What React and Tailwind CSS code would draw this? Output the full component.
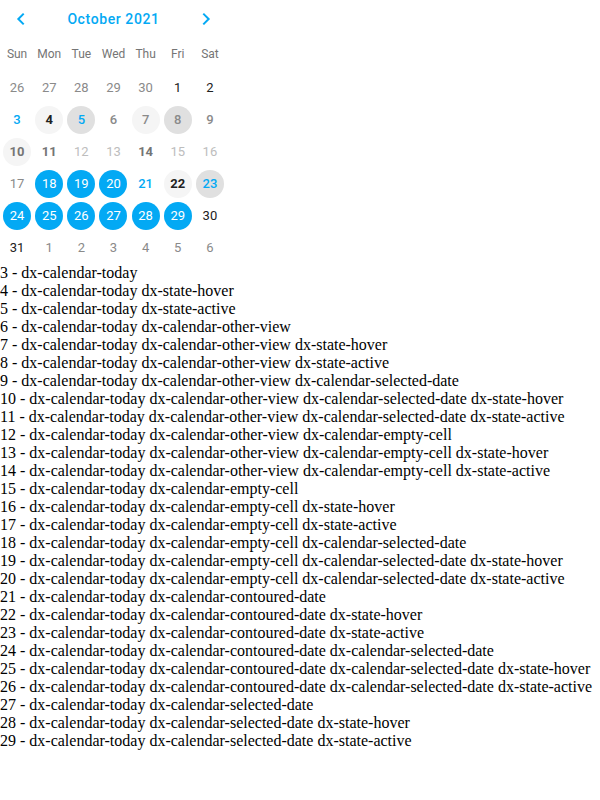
import React from 'react';

const BLUE = 'text-[#03a9f4]';

// each cell: [label, text classes, bg classes]
const rows = [
  [
    ['26', 'text-[#8a8a8a]', ''],
    ['27', 'text-[#8a8a8a]', ''],
    ['28', 'text-[#8a8a8a]', ''],
    ['29', 'text-[#8a8a8a]', ''],
    ['30', 'text-[#8a8a8a]', ''],
    ['1', 'text-[#212121]', ''],
    ['2', 'text-[#212121]', ''],
  ],
  [
    ['3', BLUE + ' font-medium', ''],
    ['4', 'text-[#212121] font-bold', 'bg-[#f5f5f5]'],
    ['5', BLUE + ' font-medium', 'bg-[#e0e0e0]'],
    ['6', 'text-[#8a8a8a] font-medium', ''],
    ['7', 'text-[#8a8a8a] font-medium', 'bg-[#f5f5f5]'],
    ['8', 'text-[#8a8a8a] font-medium', 'bg-[#e0e0e0]'],
    ['9', 'text-[#8a8a8a] font-medium', ''],
  ],
  [
    ['10', 'text-[#757575] font-bold', 'bg-[#f5f5f5]'],
    ['11', 'text-[#757575] font-bold', ''],
    ['12', 'text-[#bdbdbd]', ''],
    ['13', 'text-[#bdbdbd]', ''],
    ['14', 'text-[#757575] font-bold', ''],
    ['15', 'text-[#bdbdbd]', ''],
    ['16', 'text-[#bdbdbd]', ''],
  ],
  [
    ['17', 'text-[#8a8a8a]', ''],
    ['18', 'text-white', 'bg-[#03a9f4]'],
    ['19', 'text-white', 'bg-[#03a9f4]'],
    ['20', 'text-white', 'bg-[#03a9f4]'],
    ['21', BLUE + ' font-medium', ''],
    ['22', 'text-[#212121] font-bold', 'bg-[#f5f5f5]'],
    ['23', BLUE + ' font-medium', 'bg-[#e0e0e0]'],
  ],
  [
    ['24', 'text-white', 'bg-[#03a9f4]'],
    ['25', 'text-white', 'bg-[#03a9f4]'],
    ['26', 'text-white', 'bg-[#03a9f4]'],
    ['27', 'text-white', 'bg-[#03a9f4]'],
    ['28', 'text-white', 'bg-[#03a9f4]'],
    ['29', 'text-white', 'bg-[#03a9f4]'],
    ['30', 'text-[#212121]', ''],
  ],
  [
    ['31', 'text-[#212121]', ''],
    ['1', 'text-[#8a8a8a]', ''],
    ['2', 'text-[#8a8a8a]', ''],
    ['3', 'text-[#8a8a8a]', ''],
    ['4', 'text-[#8a8a8a]', ''],
    ['5', 'text-[#8a8a8a]', ''],
    ['6', 'text-[#8a8a8a]', ''],
  ],
];

const lines = [
  '3 - dx-calendar-today',
  '4 - dx-calendar-today dx-state-hover',
  '5 - dx-calendar-today dx-state-active',
  '6 - dx-calendar-today dx-calendar-other-view',
  '7 - dx-calendar-today dx-calendar-other-view dx-state-hover',
  '8 - dx-calendar-today dx-calendar-other-view dx-state-active',
  '9 - dx-calendar-today dx-calendar-other-view dx-calendar-selected-date',
  '10 - dx-calendar-today dx-calendar-other-view dx-calendar-selected-date dx-state-hover',
  '11 - dx-calendar-today dx-calendar-other-view dx-calendar-selected-date dx-state-active',
  '12 - dx-calendar-today dx-calendar-other-view dx-calendar-empty-cell',
  '13 - dx-calendar-today dx-calendar-other-view dx-calendar-empty-cell dx-state-hover',
  '14 - dx-calendar-today dx-calendar-other-view dx-calendar-empty-cell dx-state-active',
  '15 - dx-calendar-today dx-calendar-empty-cell',
  '16 - dx-calendar-today dx-calendar-empty-cell dx-state-hover',
  '17 - dx-calendar-today dx-calendar-empty-cell dx-state-active',
  '18 - dx-calendar-today dx-calendar-empty-cell dx-calendar-selected-date',
  '19 - dx-calendar-today dx-calendar-empty-cell dx-calendar-selected-date dx-state-hover',
  '20 - dx-calendar-today dx-calendar-empty-cell dx-calendar-selected-date dx-state-active',
  '21 - dx-calendar-today dx-calendar-contoured-date',
  '22 - dx-calendar-today dx-calendar-contoured-date dx-state-hover',
  '23 - dx-calendar-today dx-calendar-contoured-date dx-state-active',
  '24 - dx-calendar-today dx-calendar-contoured-date dx-calendar-selected-date',
  '25 - dx-calendar-today dx-calendar-contoured-date dx-calendar-selected-date dx-state-hover',
  '26 - dx-calendar-today dx-calendar-contoured-date dx-calendar-selected-date dx-state-active',
  '27 - dx-calendar-today dx-calendar-selected-date',
  '28 - dx-calendar-today dx-calendar-selected-date dx-state-hover',
  '29 - dx-calendar-today dx-calendar-selected-date dx-state-active',
];

const Chevron = ({ dir }) => (
  <svg width="16" height="16" viewBox="0 0 24 24" fill="none" stroke="#03a9f4" strokeWidth="3" strokeLinecap="square">
    {dir === 'left' ? <path d="M15 5 8 12l7 7" /> : <path d="M9 5l7 7-7 7" />}
  </svg>
);

export default function App() {
  return (
    <div className="bg-white">
      {/* calendar */}
      <div className="w-[226px] pl-px font-['Roboto',sans-serif]">
        <div className="flex items-center justify-between h-[38px] px-[4px]">
          <button className="w-[32px] h-[32px] flex items-center justify-center"><Chevron dir="left" /></button>
          <span className="text-[14px] font-medium tracking-[0.6px] text-[#03a9f4]">October 2021</span>
          <button className="w-[32px] h-[32px] flex items-center justify-center"><Chevron dir="right" /></button>
        </div>
        <div className="grid grid-cols-7 h-[32px] mb-[2px] items-center text-center text-[12px] text-[#757575]">
          {['Sun', 'Mon', 'Tue', 'Wed', 'Thu', 'Fri', 'Sat'].map((d) => (
            <span key={d}>{d}</span>
          ))}
        </div>
        {rows.map((row, i) => (
          <div key={i} className="grid grid-cols-7">
            {row.map(([label, txt, bg], j) => (
              <div key={j} className="h-[32px] flex items-center justify-center">
                <span className={`w-[28px] h-[28px] rounded-full flex items-center justify-center text-[13px] ${txt} ${bg}`}>
                  {label}
                </span>
              </div>
            ))}
          </div>
        ))}
      </div>
      {/* legend */}
      <div className="font-['Liberation_Serif',serif] text-[16px] leading-[18px] text-black">
        {lines.map((l) => (
          <div key={l}>{l}</div>
        ))}
      </div>
    </div>
  );
}
